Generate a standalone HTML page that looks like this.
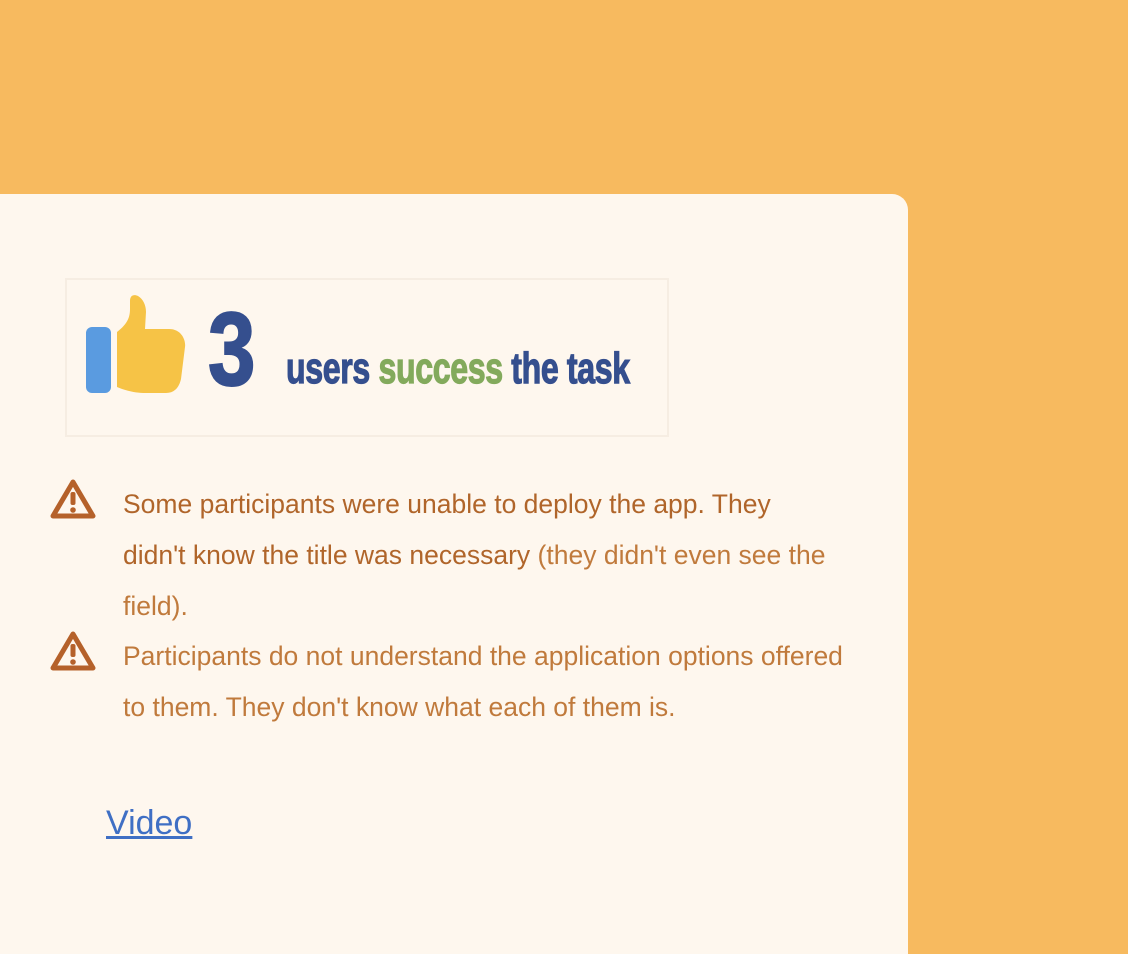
<!DOCTYPE html>
<html><head><style>
html,body{margin:0;padding:0;width:1128px;height:924px;overflow:hidden;background:#f7ba5f;font-family:"Liberation Sans",sans-serif}
.card{position:absolute;left:0;top:194px;width:908px;height:760px;background:#fef7ee;border-top-right-radius:16px}
.box{position:absolute;left:65px;top:278px;width:600px;height:155px;border:2px solid #f6ede2}
.big{position:absolute;left:208px;top:298px;font-size:104px;font-weight:bold;color:#354f8e;transform:scaleX(0.82);transform-origin:left top;line-height:104px;-webkit-text-stroke:2px #354f8e}
.tag{position:absolute;left:286px;top:344px;font-size:44px;font-weight:bold;color:#354f8e;transform:scaleX(0.73);transform-origin:left top;line-height:50px;white-space:nowrap;letter-spacing:-0.5px;-webkit-text-stroke:1.2px #354f8e}
.tag span{color:#83aa5c;-webkit-text-stroke:1.2px #83aa5c}
.p{position:absolute;left:123px;width:780px;font-size:26.5px;line-height:51px;color:#c07a3c;font-weight:300;white-space:nowrap}
.p b{font-weight:normal;color:#b0652a}
.warn{position:absolute;left:49px}
a{position:absolute;left:106px;top:804px;font-size:34px;color:#3f6fc4;text-decoration:underline}
</style></head><body>
<div class="card"></div>
<div class="box"></div>
<svg style="position:absolute;left:86px;top:295px" width="108" height="100">
<rect x="0" y="32" width="25" height="66" rx="6" fill="#5a9be0"/>
<path d="M31 37 C40 30 44 24 44 14 L44 6 C44 0 48 -1 52 1 C57 4 60 10 60 17 L59 34 L83 34 C96 34 100 46 99 52 L95 84 C93 93 88 98 80 98 L60 98 C48 98 38 95 31 92 Z" fill="#f6c346"/>
</svg>
<div class="big">3</div>
<div class="tag">users <span>success</span> the task</div>
<svg class="warn" style="top:478px" width="48" height="44" viewBox="0 0 48 44"><path d="M24 4 L44 38 L4 38 Z" fill="none" stroke="#b5612a" stroke-width="5" stroke-linejoin="round"/><rect x="21.5" y="14" width="5" height="13" rx="2" fill="#b5612a"/><circle cx="24" cy="32" r="2.8" fill="#b5612a"/></svg>
<svg class="warn" style="top:630px" width="48" height="44" viewBox="0 0 48 44"><path d="M24 4 L44 38 L4 38 Z" fill="none" stroke="#b5612a" stroke-width="5" stroke-linejoin="round"/><rect x="21.5" y="14" width="5" height="13" rx="2" fill="#b5612a"/><circle cx="24" cy="32" r="2.8" fill="#b5612a"/></svg>
<div class="p" style="top:479px"><b>Some participants were unable to deploy the app. They<br>didn't know the title was necessary</b> (they didn't even see the<br>field).</div>
<div class="p" style="top:631px">Participants do not understand the application options offered<br>to them. They don't know what each of them is.</div>
<a>Video</a>
</body></html>
